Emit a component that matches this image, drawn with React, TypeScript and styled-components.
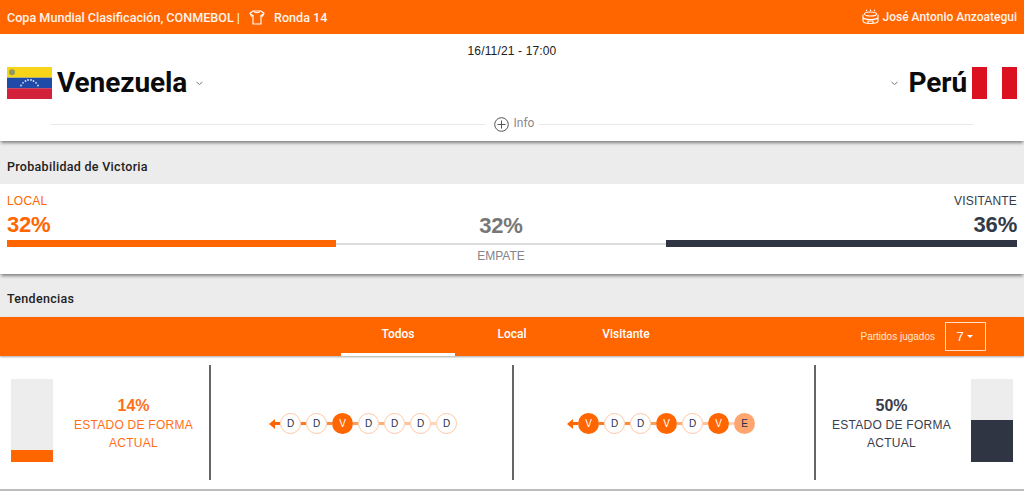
import React from "react";
import styled, { createGlobalStyle } from "styled-components";

const Global = createGlobalStyle`
  html, body { margin: 0; padding: 0; background: #fff; }
  body { font-family: Roboto, "Liberation Sans", Arial, sans-serif; overflow: hidden; }
  * { box-sizing: border-box; }
`;
const Page = styled.div`width: 1024px; height: 492px; overflow: hidden; background: #fff;`;
const TopBar = styled.header`
  height: 34px; background: #ff6600; color: #fff; display: flex; align-items: center;
  padding: 0 7px; font-size: 12px; box-shadow: 0 1px 2px rgba(0,0,0,.45);
  position: relative; justify-content: space-between;
`;
const TopGroup = styled.div`display: flex; align-items: center;`;
const Competition = styled.span`font-size: 12.6px; font-weight: 500; color: #fff3ea;`;
const Venue = styled.span`font-weight: 500; color: #fff3ea;`;
const IconGap = styled.span<{ $w: number }>`width: ${p => p.$w}px; flex: none;`;
const Match = styled.section`
  height: 107px; background: #fff; box-shadow: 0 3px 3px -1px rgba(0,0,0,.45); position: relative;
  display: flex; flex-direction: column; align-items: center; padding: 10px 7px 0;
`;
const DateText = styled.div`font-size: 12px; line-height: 14px; color: #222; font-family: "Liberation Sans", sans-serif; letter-spacing: .15px;`;
const Teams = styled.div`width: 100%; display: flex; justify-content: space-between; align-items: center; height: 32px; margin-top: 9px;`;
const Team = styled.div`display: flex; align-items: center;`;
const TeamName = styled.span`font-size: 28px; font-weight: 700; color: #0b0b0b; line-height: 32px; letter-spacing: -.1px;`;
const InfoRow = styled.div`width: 922px; margin: 18px 0 0 0; display: flex; align-items: center; color: #8a8a8a; font-size: 12px;`;
const Line = styled.div`flex: 1; height: 1px; background: #eaeaea;`;
const InfoBody = styled.div`display: flex; align-items: center; gap: 5px; padding: 0 5px 0 9px;`;
const InfoLabel = styled.span`position: relative; top: -2px;`;
const SectionHead = styled.div<{ $offset: number }>`
  height: 43px; background: #ececec; display: flex; align-items: center; padding: ${p => p.$offset}px 7px 0;
  font-size: 12.5px; font-weight: 500; color: #222; letter-spacing: .3px;
`;
const Prob = styled.section`
  height: 90px; background: #fff; box-shadow: 0 3px 3px -1px rgba(0,0,0,.45); position: relative;
  padding: 10px 7px 0; font-family: "Liberation Sans", sans-serif;
`;
const ProbRow = styled.div`display: flex; height: 46px;`;
const ProbCol = styled.div<{ $align: string; $flex: number; $top?: number }>`
  display: flex; flex-direction: column; align-items: ${p => p.$align}; flex: 0 0 ${p => p.$flex}px; padding-top: ${p => p.$top ?? 0}px;
`;
const ProbLabel = styled.span<{ $color: string }>`font-size: 12px; line-height: 14px; letter-spacing: .2px; color: ${p => p.$color};`;
const ProbValue = styled.span<{ $color: string }>`font-size: 22px; font-weight: 700; line-height: 25px; color: ${p => p.$color}; margin-top: 4px; letter-spacing: -.2px;`;
const CenterValue = styled(ProbValue)`margin-top: 0;`;
const Bars = styled.div`display: flex; align-items: center; height: 7px;`;
const BarSegment = styled.div<{ $w: number; $color: string; $h: number }>`
  width: ${p => p.$w}px; height: ${p => p.$h}px; background: ${p => p.$color};
`;
const Empate = styled.div`width: 988px; text-align: center; font-size: 12px; line-height: 14px; color: #84848a; margin-top: 2px;`;
const Tabs = styled.nav`
  height: 39px; background: #ff6600; box-shadow: 0 1px 2px rgba(0,0,0,.35); position: relative;
  display: flex; align-items: stretch; padding-left: 341px;
`;
const Tab = styled.div<{ $active?: boolean }>`
  width: 114px; height: 39px; color: #fff; font-size: 12px; font-weight: 500; text-align: center;
  padding-top: 10px; line-height: 15px; border-bottom: 3px solid ${p => p.$active ? "#fff" : "transparent"};
`;
const Played = styled.div`
  margin-left: auto; display: flex; align-items: center; color: #ffe6d6; font-size: 10px;
  font-family: "Liberation Sans", sans-serif; padding-right: 38px; gap: 10px;
`;
const Select = styled.div`
  width: 41px; height: 29px; border: 1px solid #ffe0cc; color: #fff; display: flex; align-items: center; justify-content: center;
  gap: 3px; font-size: 13px; margin-top: -1px; padding-right: 2px;
`;
const Caret = styled.span`width: 0; height: 0; border-left: 3.5px solid transparent; border-right: 3.5px solid transparent; border-top: 3.5px solid #fff;`;
const Form = styled.section`
  height: 135px; display: grid; grid-template-columns: 211px 303px 302px 208px; align-items: start;
  padding-top: 9px; border-bottom: 2px solid #bdbdbd; font-family: "Liberation Sans", sans-serif;
`;
const Cell = styled.div<{ $divider?: boolean; $pl?: number; $pr?: number }>`
  height: 115px; display: flex; align-items: center; justify-content: center;
  padding: 0 ${p => p.$pr ?? 0}px 0 ${p => p.$pl ?? 0}px;
  border-right: ${p => p.$divider ? "2px solid #666" : "none"};
`;
const FormSide = styled.div<{ $pl?: number; $pr?: number }>`
  width: 100%; height: 115px; display: flex; align-items: center;
  padding: 0 ${p => p.$pr ?? 0}px 5px ${p => p.$pl ?? 0}px;
`;
const Gauge = styled.div`width: 42px; height: 83px; background: #ededed; display: flex; flex-direction: column; justify-content: flex-end; flex: none;`;
const GaugeFill = styled.div<{ $color: string; $h: number }>`background: ${p => p.$color}; height: ${p => p.$h}px;`;
const FormText = styled.div<{ $color: string; $pl?: number; $pr?: number }>`
  flex: 1; text-align: center; color: ${p => p.$color}; font-size: 12px; line-height: 18px; letter-spacing: .25px;
  padding: 7px ${p => p.$pr ?? 0}px 0 ${p => p.$pl ?? 0}px;
`;
const FormPct = styled.div`font-size: 16px; font-weight: 700; line-height: 20px; letter-spacing: 0;`;
const Chain = styled.div`display: flex; align-items: center; position: relative; margin-top: 2px;`;
const Arrow = styled.span`
  width: 0; height: 0; border-top: 5px solid transparent; border-bottom: 5px solid transparent; border-right: 6px solid #ff6600; flex: none;
`;
const Link = styled.span<{ $o: number }>`height: 3px; width: 5px; background: #ff6600; opacity: ${p => p.$o}; flex: none;`;
const Dot = styled.span<{ $kind: string }>`
  width: 21px; height: 21px; border-radius: 50%; flex: none; display: flex; align-items: center; justify-content: center;
  font-size: 10px; line-height: 1;
  color: ${p => p.$kind === "V" ? "#fff" : "#25304a"};
  background: ${p => p.$kind === "V" ? "#ff6600" : p.$kind === "E" ? "#ffa570" : "#fff"};
  border: ${p => p.$kind === "D" ? "1px solid #ffc7a3" : "none"};
`;
const FlagLeft = styled.svg`margin-right: 5px; flex: none;`;
const FlagRight = styled.svg`margin-left: 5px; flex: none;`;
const ChevronIcon = styled.svg<{ $ml: number; $mr: number }>`margin-left: ${p => p.$ml}px; margin-right: ${p => p.$mr}px;`;

function Shirt() {
  return (
    <svg width="16" height="17" viewBox="0 0 16 17" fill="none" stroke="#fff" strokeWidth="1.100">
      <path d="M4 2h8l3 2.200-1.500 3-1.500-.7V15H4V6.500l-1.500.7L1 4.200z" />
      <path d="M5 2c.5 2.400 5.500 2.400 6 0M1.500 5l2.500 1.500M14.500 5 12 6.500" />
    </svg>
  );
}
function Stadium() {
  return (
    <svg width="17" height="16" viewBox="0 0 17 16" fill="none" stroke="#fff" strokeWidth="1.100">
      <ellipse cx="8.500" cy="5" rx="6" ry="2" />
      <path d="M1 5.500v6.500c0 1.500 3 2.500 7.500 2.500S16 13.500 16 12V5.500M1 9c2.500 2 12.500 2 15 0M6 14.500V12h5v2.500" />
      <path d="M4.500 .8v1.500M8.500 .5V2M12.500 .8v1.500" />
    </svg>
  );
}
function Venezuela() {
  return (
    <FlagLeft width="45" height="32" viewBox="0 0 45 32">
      <rect width="45" height="10.700" fill="#f7d417" />
      <rect y="10.700" width="45" height="10.700" fill="#1f4aa8" />
      <rect y="21.300" width="45" height="10.700" fill="#d3213c" />
      <circle cx="5" cy="5.200" r="3" fill="#8f9a5b" />
      <g fill="#d5dff2">
        {[[14,18.500],[16,15.800],[18.500,14],[21,13],[24,13],[26.500,14],[29,15.800],[31,18.500]].map(([x, y]) => (
          <circle key={x} cx={x} cy={y} r="0.900" />
        ))}
      </g>
    </FlagLeft>
  );
}
function Peru() {
  return (
    <FlagRight width="45" height="32" viewBox="0 0 45 32">
      <rect width="45" height="32" fill="#fff" />
      <rect width="15" height="32" fill="#dc111f" />
      <rect x="30" width="15" height="32" fill="#dc111f" />
    </FlagRight>
  );
}
function Chevron({ ml, mr }: { ml: number; mr: number }) {
  return (
    <ChevronIcon $ml={ml} $mr={mr} width="7" height="5" viewBox="0 0 7 5" fill="none" stroke="#777" strokeWidth="1">
      <path d="M.5 1l3 2.500 3-2.500" />
    </ChevronIcon>
  );
}
function Plus() {
  return (
    <svg width="15" height="15" viewBox="0 0 15 15" fill="none" stroke="#555" strokeWidth="1">
      <circle cx="7.500" cy="7.500" r="6.800" />
      <path d="M3.500 7.500h8M7.500 3.500v8" />
    </svg>
  );
}
function Sequence({ items }: { items: string[] }) {
  return (
    <Chain>
      <Arrow />
      {items.map((k, i) => (
        <React.Fragment key={i}>
          <Link $o={i === 0 ? 1 : 1 - i * 0.12} />
          <Dot $kind={k}>{k}</Dot>
        </React.Fragment>
      ))}
    </Chain>
  );
}

export default function App() {
  return (
    <Page>
      <Global />
      <TopBar>
        <TopGroup>
          <Competition>Copa Mundial Clasificación, CONMEBOL |</Competition>
          <IconGap $w={9} />
          <Shirt />
          <IconGap $w={9} />
          <Competition>Ronda 14</Competition>
        </TopGroup>
        <TopGroup>
          <Stadium />
          <IconGap $w={3} />
          <Venue>José Antonio Anzoategui</Venue>
        </TopGroup>
      </TopBar>
      <Match>
        <DateText>16/11/21 - 17:00</DateText>
        <Teams>
          <Team><Venezuela /><TeamName>Venezuela</TeamName><Chevron ml={9} mr={0} /></Team>
          <Team><Chevron ml={0} mr={10} /><TeamName>Perú</TeamName><Peru /></Team>
        </Teams>
        <InfoRow>
          <Line />
          <InfoBody><Plus /><InfoLabel>Info</InfoLabel></InfoBody>
          <Line />
        </InfoRow>
      </Match>
      <SectionHead $offset={7}>Probabilidad de Victoria</SectionHead>
      <Prob>
        <ProbRow>
          <ProbCol $align="flex-start" $flex={329}>
            <ProbLabel $color="#ff6600">LOCAL</ProbLabel>
            <ProbValue $color="#ff6600">32%</ProbValue>
          </ProbCol>
          <ProbCol $align="center" $flex={330} $top={19}><CenterValue $color="#777">32%</CenterValue></ProbCol>
          <ProbCol $align="flex-end" $flex={351}>
            <ProbLabel $color="#333a47">VISITANTE</ProbLabel>
            <ProbValue $color="#333a47">36%</ProbValue>
          </ProbCol>
        </ProbRow>
        <Bars>
          <BarSegment $w={329} $color="#ff6600" $h={7} />
          <BarSegment $w={330} $color="#dcdcdc" $h={2} />
          <BarSegment $w={351} $color="#2f3542" $h={7} />
        </Bars>
        <Empate>EMPATE</Empate>
      </Prob>
      <SectionHead $offset={6}>Tendencias</SectionHead>
      <Tabs>
        <Tab $active>Todos</Tab>
        <Tab>Local</Tab>
        <Tab>Visitante</Tab>
        <Played>
          Partidos jugados
          <Select>7 <Caret /></Select>
        </Played>
      </Tabs>
      <Form>
        <Cell $divider>
          <FormSide $pl={11}>
            <Gauge><GaugeFill $color="#ff6600" $h={12} /></Gauge>
            <FormText $color="#ff6f1a" $pl={5}><FormPct>14%</FormPct>ESTADO DE FORMA<br />ACTUAL</FormText>
          </FormSide>
        </Cell>
        <Cell $divider $pl={3}><Sequence items={["D","D","V","D","D","D","D"]} /></Cell>
        <Cell $divider $pr={6}><Sequence items={["V","D","D","V","D","V","E"]} /></Cell>
        <Cell>
          <FormSide $pr={11}>
            <FormText $color="#3a404c" $pr={4}><FormPct>50%</FormPct>ESTADO DE FORMA<br />ACTUAL</FormText>
            <Gauge><GaugeFill $color="#2f3542" $h={42} /></Gauge>
          </FormSide>
        </Cell>
      </Form>
    </Page>
  );
}
